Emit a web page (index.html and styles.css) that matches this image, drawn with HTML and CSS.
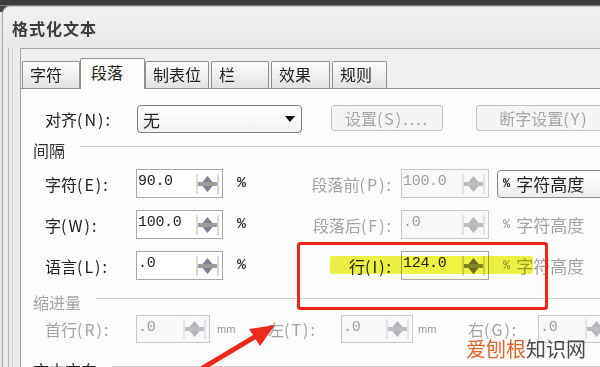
FILE: index.html
```html
<!DOCTYPE html>
<html lang="zh-CN">
<head>
<meta charset="utf-8">
<title>格式化文本</title>
<link rel="stylesheet" href="styles.css">
</head>
<body>
<div class="topbar"></div>
<div class="window">
  <div class="titlebar">格式化文本</div>
  <div class="client">
    <div class="client-in">
      <div class="frame">
        <div class="tabs">
          <div class="tab">字符</div>
          <div class="tab active">段落</div>
          <div class="tab">制表位</div>
          <div class="tab">栏</div>
          <div class="tab">效果</div>
          <div class="tab">规则</div>
        </div>
        <div class="panel">
          <div class="row row-top">
            <span class="lbl">对齐<span class="k">(N):</span></span>
            <div class="select">无<span class="caret"></span></div>
            <div class="btn btn-set">设置<span class="k">(S)....</span></div>
            <div class="btn btn-hyph">断字设置<span class="k">(Y)</span></div>
          </div>

          <div class="section">间隔</div>

          <div class="row">
            <span class="lbl">字符<span class="k">(E):</span></span>
            <div class="spin w87"><span class="val">90.0</span><svg class="sp" viewBox="0 0 25 22" width="25" height="22"><path d="M2 1v20M23 1v20" stroke="#b3b3b3"/><rect x="3" y="9" width="19" height="4" fill="#9c9c9c"/><path d="M12.5 3l-5 6h10zM12.5 19l-5-6h10z" fill="#7c7f96"/></svg></div>
            <span class="unit">%</span>
            <span class="lbl2 dis">段落前<span class="k">(P):</span></span>
            <div class="spin w88 off"><span class="val">100.0</span><svg class="sp" viewBox="0 0 25 22" width="25" height="22"><path d="M2 1v20M23 1v20" stroke="#cfcfcf"/><rect x="3" y="9" width="19" height="4" fill="#bdbdbd"/><path d="M12.5 3l-5 6h10zM12.5 19l-5-6h10z" fill="#b4b5c0"/></svg></div>
            <div class="select2"><span class="pct">%</span>字符高度</div>
          </div>

          <div class="row">
            <span class="lbl">字<span class="k">(W):</span></span>
            <div class="spin w87"><span class="val">100.0</span><svg class="sp" viewBox="0 0 25 22" width="25" height="22"><path d="M2 1v20M23 1v20" stroke="#b3b3b3"/><rect x="3" y="9" width="19" height="4" fill="#9c9c9c"/><path d="M12.5 3l-5 6h10zM12.5 19l-5-6h10z" fill="#7c7f96"/></svg></div>
            <span class="unit">%</span>
            <span class="lbl2 dis">段落后<span class="k">(F):</span></span>
            <div class="spin w88 off"><span class="val">.0</span><svg class="sp" viewBox="0 0 25 22" width="25" height="22"><path d="M2 1v20M23 1v20" stroke="#cfcfcf"/><rect x="3" y="9" width="19" height="4" fill="#bdbdbd"/><path d="M12.5 3l-5 6h10zM12.5 19l-5-6h10z" fill="#b4b5c0"/></svg></div>
            <span class="after dis"><span class="pct">%</span>字符高度</span>
          </div>

          <div class="row">
            <span class="lbl">语言<span class="k">(L):</span></span>
            <div class="spin w87"><span class="val">.0</span><svg class="sp" viewBox="0 0 25 22" width="25" height="22"><path d="M2 1v20M23 1v20" stroke="#b3b3b3"/><rect x="3" y="9" width="19" height="4" fill="#9c9c9c"/><path d="M12.5 3l-5 6h10zM12.5 19l-5-6h10z" fill="#7c7f96"/></svg></div>
            <span class="unit">%</span>
            <span class="lbl2">行<span class="k">(I):</span></span>
            <div class="spin w88"><span class="val">124.0</span><svg class="sp" viewBox="0 0 25 22" width="25" height="22"><path d="M2 1v20M23 1v20" stroke="#b3b3b3"/><rect x="3" y="9" width="19" height="4" fill="#8c8c8c"/><path d="M12.5 3l-5 6h10zM12.5 19l-5-6h10z" fill="#6f7190"/></svg></div>
            <span class="after dis"><span class="pct">%</span>字符高度</span>
          </div>

          <div class="section section-ind dis">缩进量</div>

          <div class="row row-ind">
            <span class="lbl dis">首行<span class="k">(R):</span></span>
            <div class="spin w74 off"><span class="val">.0</span><svg class="sp" viewBox="0 0 25 22" width="25" height="22"><path d="M2 1v20M23 1v20" stroke="#cfcfcf"/><rect x="3" y="9" width="19" height="4" fill="#bdbdbd"/><path d="M12.5 3l-5 6h10zM12.5 19l-5-6h10z" fill="#b4b5c0"/></svg></div>
            <span class="mm mm1">mm</span>
            <span class="lbl3 dis">左<span class="k">(T):</span></span>
            <div class="spin w72 off"><span class="val">.0</span><svg class="sp" viewBox="0 0 25 22" width="25" height="22"><path d="M2 1v20M23 1v20" stroke="#cfcfcf"/><rect x="3" y="9" width="19" height="4" fill="#bdbdbd"/><path d="M12.5 3l-5 6h10zM12.5 19l-5-6h10z" fill="#b4b5c0"/></svg></div>
            <span class="mm mm2">mm</span>
            <span class="lbl4 dis">右<span class="k">(G):</span></span>
            <div class="spin w74 off"><span class="val">.0</span><svg class="sp" viewBox="0 0 25 22" width="25" height="22"><path d="M2 1v20M23 1v20" stroke="#cfcfcf"/><rect x="3" y="9" width="19" height="4" fill="#bdbdbd"/><path d="M12.5 3l-5 6h10zM12.5 19l-5-6h10z" fill="#b4b5c0"/></svg></div>
          </div>

          <div class="section section-dir">文本方向</div>
        </div>
      </div>
    </div>
  </div>
</div>

<div class="highlight"></div>
<div class="redbox"></div>
<svg class="arrow" viewBox="0 0 600 367" width="600" height="367">
  <path d="M196 372L258 335" stroke="#ee2a1c" stroke-width="5" stroke-linecap="round"/>
  <path d="M275 325L249 329L260 346Z" fill="#ee2a1c"/>
</svg>
<div class="watermark"><span class="wm-a">爱刨根</span><span class="wm-b">知识网</span></div>
</body>
</html>
```

FILE: styles.css
```css
* { box-sizing: border-box; }

body {
  margin: 0;
  width: 600px;
  height: 367px;
  overflow: hidden;
  position: relative;
  background: linear-gradient(#454545 0, #454545 12px, #e6e6e6 12px);
  font-family: "Noto Sans CJK SC", "Noto Sans", sans-serif;
  font-size: 16px;
  color: #222;
}

.topbar {
  height: 6px;
  background: #3c3c3c;
  border-bottom: 1px solid #7d7d7d;
}

.window {
  margin-left: 2px;
  width: 620px;
  height: 400px;
  border-left: 1px solid #a9a9a9;
  border-top: 1px solid #c4c4c4;
  border-top-left-radius: 8px;
  background: #ececec;
}

.titlebar {
  height: 41px;
  padding-left: 9px;
  display: flex;
  align-items: center;
  font-weight: bold;
  font-size: 16px;
  letter-spacing: 1px;
  color: #3c3c3c;
  background: linear-gradient(#f1f1f1, #e8e8e8);
  border-top-left-radius: 8px;
}

.client {
  margin-left: 5px;
  padding-left: 3px;
  height: 360px;
  border-left: 1px solid #b8b8b8;
}

.client-in {
  height: 100%;
  padding-left: 7px;
  border-left: 1px solid #d0d0d0;
}

.frame {
  height: 100%;
  padding-top: 9px;
  border-left: 1px solid #a2a2a2;
  border-top: 1px solid #a8a8a8;
  background: #efefef;
}

.tabs {
  display: flex;
  align-items: flex-end;
  height: 30px;
  padding-left: 1px;
}

.tab {
  height: 27px;
  padding-left: 7px;
  line-height: 25px;
  font-size: 16px;
  color: #1e1e1e;
  border: 1px solid #909090;
  border-bottom: none;
  border-radius: 2px 2px 0 0;
  background: linear-gradient(#fdfdfd, #e2e2e2);
}
.tab:nth-child(1) { width: 58px; }
.tab:nth-child(2) { width: 65px; }
.tab:nth-child(3) { width: 64px; }
.tab:nth-child(4) { width: 58px; margin-left: 2px; }
.tab:nth-child(5) { width: 59px; margin-left: 2px; }
.tab:nth-child(6) { width: 55px; margin-left: 2px; }

.tab.active {
  height: 31px;
  margin-bottom: -1px;
  padding-left: 10px;
  line-height: 27px;
  background: #fcfcfc;
  position: relative;
  z-index: 1;
}

.panel {
  height: 300px;
  padding: 16px 0 0 12px;
  border-top: 1px solid #909090;
  background: #fcfcfc;
}

.k { letter-spacing: 2px; }
.dis { color: #a3a3a3; }

.row {
  display: flex;
  align-items: center;
  height: 29px;
  margin-top: 12px;
  padding-left: 12px;
  white-space: nowrap;
}
.row-top { margin-top: 0; height: 28px; }
.row-ind { margin-top: 3px; height: 28px; }

.lbl { width: 91px; flex: none; }

.select {
  width: 165px;
  height: 28px;
  margin-left: 1px;
  padding-left: 5px;
  display: flex;
  align-items: center;
  justify-content: space-between;
  padding-right: 6px;
  font-size: 17px;
  border: 1px solid #7e7e7e;
  border-radius: 4px;
  background: linear-gradient(#ffffff, #f1f1f1);
}
.caret {
  width: 0;
  height: 0;
  border-left: 5px solid transparent;
  border-right: 5px solid transparent;
  border-top: 6px solid #111;
}

.btn {
  height: 26px;
  margin-top: -2px;
  display: flex;
  align-items: center;
  justify-content: center;
  color: #a6a6a6;
  border: 1px solid #c3c3c3;
  border-radius: 3px;
  background: #f5f5f5;
  flex: none;
}
.btn-set { width: 112px; margin-left: 29px; }
.btn-hyph { width: 136px; margin-left: 33px; }

.section {
  display: flex;
  align-items: center;
  height: 20px;
  margin-top: 7px;
  color: #333;
}
.section::after {
  content: "";
  flex: 1;
  height: 1px;
  margin-left: 15px;
  margin-bottom: 7px;
  background: #cfcfcf;
}
.section + .row { margin-top: 9px; }
.section-ind { margin-top: 12px; color: #a3a3a3; }
.section-ind + .row { margin-top: 3px; }
.section-dir { margin-top: 17px; color: #222; }

.spin {
  height: 29px;
  flex: none;
  display: flex;
  align-items: center;
  padding-right: 2px;
  border: 1px solid #a7a7a7;
  background: #fff;
}
.row-ind .spin { height: 28px; }
.spin.off { border-color: #c9c9c9; background: #f8f8f8; color: #9e9e9e; }
.w87 { width: 87px; }
.w88 { width: 88px; }
.w74 { width: 74px; }
.w72 { width: 72px; }

.val {
  flex: 1;
  align-self: flex-start;
  padding: 3px 0 0 1px;
  font-family: "Liberation Mono", monospace;
  font-size: 15px;
  line-height: 18px;
  letter-spacing: -0.3px;
}
.sp { flex: none; }

.unit {
  width: 74px;
  padding-left: 14px;
  flex: none;
  font-family: "Liberation Mono", monospace;
  font-weight: bold;
  font-size: 15px;
  color: #333;
}

.lbl2 {
  width: 96px;
  margin-right: 8px;
  text-align: right;
  flex: none;
}

.select2 {
  width: 130px;
  height: 28px;
  margin-left: 8px;
  padding-left: 5px;
  display: flex;
  align-items: center;
  flex: none;
  font-size: 17px;
  color: #222;
  border: 1px solid #8a8a8a;
  border-radius: 4px;
  background: linear-gradient(#ffffff, #ededed);
}
.pct {
  font-family: "Liberation Mono", monospace;
  font-size: 12px;
  font-weight: bold;
  margin-right: 6px;
}
.after {
  margin-left: 14px;
  font-size: 17px;
  display: flex;
  align-items: center;
}

.mm {
  flex: none;
  font-family: "Liberation Sans", sans-serif;
  font-size: 11px;
  color: #9a9a9a;
}
.mm1 { width: 58px; padding-left: 7px; }
.mm2 { width: 55px; padding-left: 5px; }
.lbl3 { width: 73px; flex: none; }
.lbl4 { width: 70px; flex: none; }

/* annotation overlays */
.highlight {
  position: absolute;
  left: 330px;
  top: 256px;
  width: 203px;
  height: 18px;
  background: #eef22e;
  mix-blend-mode: multiply;
  border-radius: 3px;
  opacity: 0.9;
}
.redbox {
  position: absolute;
  left: 297px;
  top: 242px;
  width: 251px;
  height: 68px;
  border: 3px solid #ec2419;
  border-radius: 3px;
}
.arrow {
  position: absolute;
  left: 0;
  top: 0;
}
.watermark {
  position: absolute;
  left: 466px;
  top: 339px;
  font-size: 20px;
  line-height: 20px;
  white-space: nowrap;
}
.wm-a { color: #e2662c; }
.wm-b { color: #4a4a4a; }
```
